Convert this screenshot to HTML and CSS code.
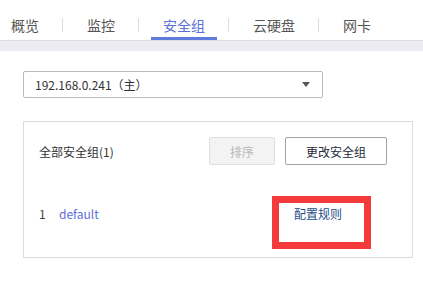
FILE: index.html
```html
<!DOCTYPE html>
<html>
<head>
    <title>安全组</title>
    <link rel="stylesheet" href="styles.css">
</head>
<body>
    <div class="tabs">
        <div class="tab first">概览</div>
        <span class="tab-sep"></span>
        <div class="tab">监控</div>
        <span class="tab-sep"></span>
        <div class="tab active">安全组</div>
        <span class="tab-sep"></span>
        <div class="tab">云硬盘</div>
        <span class="tab-sep"></span>
        <div class="tab">网卡</div>
    </div>
    <div class="strip"></div>

    <div class="content">
        <div class="select">
            <span>192.168.0.241（主）</span>
            <span class="arrow"></span>
        </div>

        <div class="card">
            <div class="card-head">
                <span class="card-title">全部安全组(1)</span>
                <div class="actions">
                    <button class="btn btn-disabled" disabled>排序</button>
                    <button class="btn">更改安全组</button>
                </div>
            </div>
            <div class="row">
                <span class="row-num">1</span>
                <span class="row-name">default</span>
                <span class="row-link">配置规则</span>
            </div>
            <!-- annotation box -->
            <div class="highlight"></div>
        </div>
    </div>
</body>
</html>
```

FILE: styles.css
```css
body {
    margin: 0;
    font-family: "Noto Sans CJK SC", "Noto Sans", sans-serif;
    color: #333;
    background: #fff;
}

.tabs {
    display: flex;
    align-items: flex-start;
    height: 40px;
    padding-left: 11px;
}

.tab {
    box-sizing: border-box;
    height: 40px;
    padding: 15px 12px 0;
    font-size: 14px;
    line-height: 20px;
    color: #555;
    border-bottom: 3px solid transparent;
}

.tab.first {
    padding-left: 0;
}

.tab.active {
    color: #5a6fd8;
    border-bottom-color: #5d7adc;
}

.tab-sep {
    width: 1px;
    height: 14px;
    margin: 18px 12px 0 11px;
    background: #dcdce2;
}

.strip {
    height: 10px;
    background: #ececf2;
    border-top: 1px solid #dedee4;
}

.content {
    padding: 20px 10px 0 23px;
}

.select {
    box-sizing: border-box;
    width: 300px;
    height: 27px;
    display: flex;
    align-items: center;
    justify-content: space-between;
    padding: 0 12px 0 11px;
    border: 1px solid #b8b8c0;
    border-radius: 2px;
    font-size: 12px;
    color: #333;
}

.arrow {
    width: 0;
    height: 0;
    border-left: 4px solid transparent;
    border-right: 4px solid transparent;
    border-top: 5px solid #575760;
}

.card {
    position: relative;
    box-sizing: border-box;
    width: 390px;
    height: 137px;
    margin-top: 23px;
    padding: 15px 25px 0 15px;
    border: 1px solid #dcdcdc;
}

.card-head {
    display: flex;
    justify-content: space-between;
    align-items: center;
    height: 28px;
}

.card-title {
    font-size: 12px;
    color: #333;
}

.actions {
    display: flex;
    gap: 10px;
}

.btn {
    box-sizing: border-box;
    height: 28px;
    padding: 0;
    font-family: inherit;
    font-size: 12px;
    color: #252b3a;
    background: #fff;
    border: 1px solid #a3a3ad;
    border-radius: 2px;
    width: 102px;
}

.btn-disabled {
    width: 66px;
    color: #b8b8bd;
    background: #f3f3f4;
    border-color: #e0e0e3;
}

.row {
    display: grid;
    grid-template-columns: 20px 235px auto;
    margin-top: 39px;
    font-size: 12px;
    line-height: 20px;
}

.row-num {
    color: #4a3a3a;
}

.row-name {
    color: #5a6fd8;
}

.row-link {
    color: #264d8a;
}

.highlight {
    position: absolute;
    left: 248px;
    top: 74px;
    width: 85px;
    height: 39px;
    border: 7px solid #f43a3a;
}
```
